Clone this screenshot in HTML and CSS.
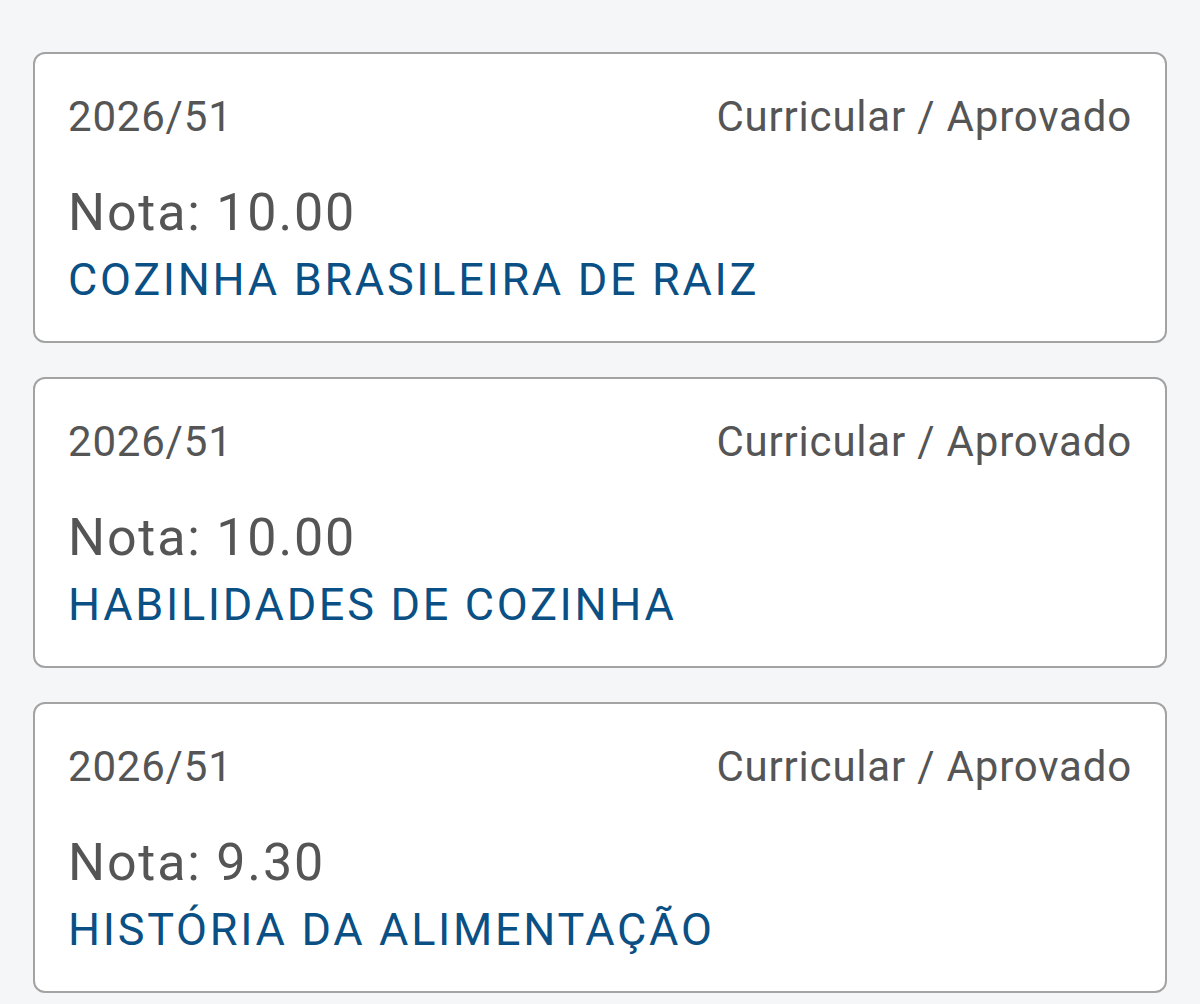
FILE: index.html
```html
<!DOCTYPE html>
<html lang="pt-BR">
<head>
<meta charset="utf-8">
<title>Notas</title>
<link rel="stylesheet" href="styles.css">
</head>
<body>
<main class="list">
  <article class="card">
    <div class="card-top">
      <span class="period">2026/51</span>
      <span class="status">Curricular / Aprovado</span>
    </div>
    <div class="grade">Nota: 10.00</div>
    <div class="subject">COZINHA BRASILEIRA DE RAIZ</div>
  </article>
  <article class="card">
    <div class="card-top">
      <span class="period">2026/51</span>
      <span class="status">Curricular / Aprovado</span>
    </div>
    <div class="grade">Nota: 10.00</div>
    <div class="subject">HABILIDADES DE COZINHA</div>
  </article>
  <article class="card">
    <div class="card-top">
      <span class="period">2026/51</span>
      <span class="status">Curricular / Aprovado</span>
    </div>
    <div class="grade">Nota: 9.30</div>
    <div class="subject">HISTÓRIA DA ALIMENTAÇÃO</div>
  </article>
</main>
</body>
</html>
```
FILE: styles.css
```css
html, body {
  margin: 0;
  padding: 0;
  background: #f5f6f8;
  font-family: Roboto, "Noto Sans", sans-serif;
}
.list {
  display: flex;
  flex-direction: column;
  gap: 34px;
  padding: 52px 33px 0 33px;
}
.card {
  box-sizing: border-box;
  height: 291px;
  background: #ffffff;
  border: 2px solid #a3a3a3;
  border-radius: 12px;
  padding: 38px 33px 0 33px;
}
.card-top {
  display: flex;
  justify-content: space-between;
  align-items: baseline;
  font-size: 42px;
  line-height: 50px;
  color: #555555;
  letter-spacing: 0.8px;
}
.grade {
  margin-top: 41px;
  font-size: 52px;
  line-height: 60px;
  color: #555555;
  letter-spacing: 1.8px;
}
.subject {
  margin-top: 12px;
  font-size: 45px;
  line-height: 50px;
  color: #0a5084;
  letter-spacing: 2.7px;
}
```
